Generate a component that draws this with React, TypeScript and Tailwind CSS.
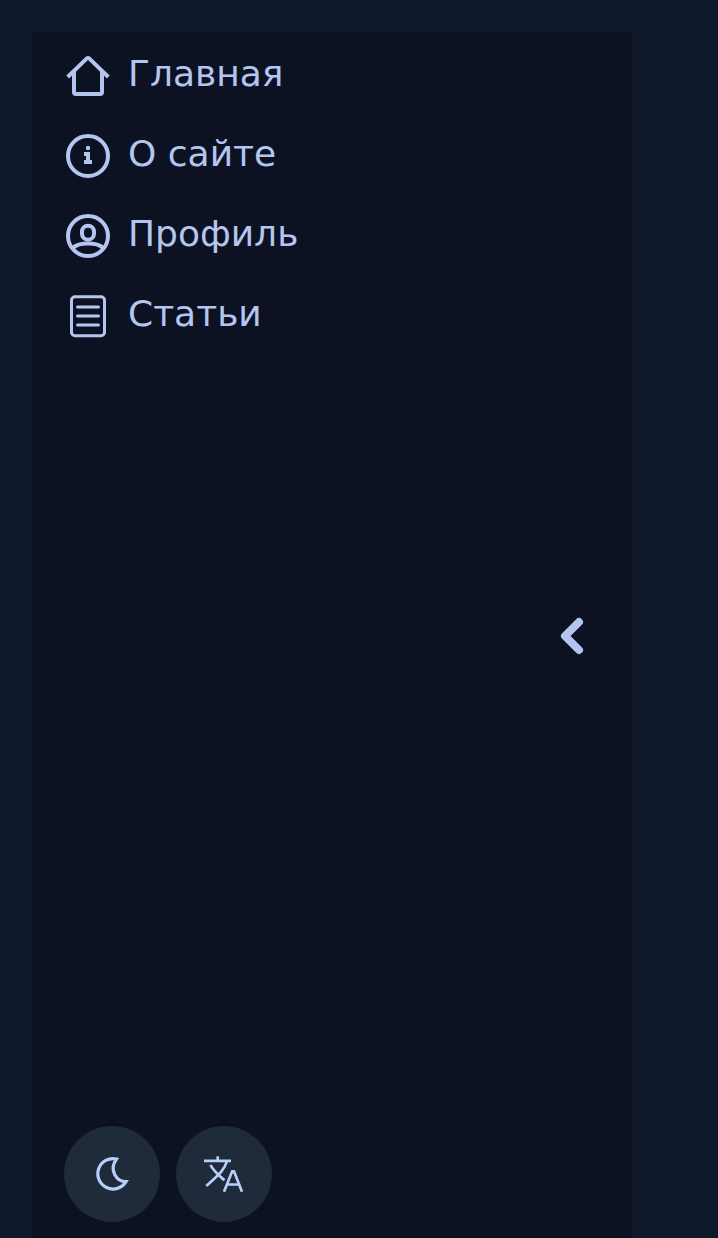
import React from "react";

type IconProps = { children: React.ReactNode; stroke?: number };

function Icon({ children, stroke = 4 }: IconProps) {
  return (
    <svg
      aria-hidden="true"
      viewBox="0 0 48 48"
      className="size-12 shrink-0"
      fill="none"
      stroke="currentColor"
      strokeWidth={stroke}
      strokeLinecap="round"
      strokeLinejoin="round"
    >
      {children}
    </svg>
  );
}

const links = [
  {
    label: "Главная",
    href: "#main",
    icon: (
      <Icon>
        <path d="M3.700 25 22.600 6.600q1.400-1.200 2.800 0L44.300 25" strokeLinecap="butt" />
        <path d="M10 19.500V40q0 2 2 2h24q2 0 2-2V19.500" />
      </Icon>
    ),
  },
  {
    label: "О сайте",
    href: "#about",
    icon: (
      <Icon>
        <circle cx="24" cy="24" r="20" />
        <circle cx="24" cy="16" r="2.200" fill="currentColor" stroke="none" />
        <path d="M20 20h6v8h2v4h-8v-4h2v-4h-2z" fill="currentColor" stroke="none" />
      </Icon>
    ),
  },
  {
    label: "Профиль",
    href: "#profile",
    icon: (
      <Icon>
        <circle cx="24" cy="24" r="20" />
        <rect x="18" y="13.700" width="12" height="14" rx="6" />
        <path d="M9.500 35.500c3-3 8-4 14.500-4s11.500 1 14.500 4" />
      </Icon>
    ),
  },
  {
    label: "Статьи",
    href: "#articles",
    icon: (
      <Icon stroke={3}>
        <rect x="7.500" y="4.800" width="33" height="39" rx="3.500" />
        <path d="M13.500 15h21M13.500 24h21M13.500 33h21" />
      </Icon>
    ),
  },
];

export default function App() {
  return (
    <div className="flex min-h-screen bg-[#0f172a] pt-8 pl-8 font-['DejaVu_Sans',sans-serif] text-[#b4c6ef]">
      <aside className="flex w-full max-w-[600px] justify-between bg-[#0c1221] pr-12 pl-8">
        <div className="flex flex-col justify-between pt-5 pb-4">
          <nav className="flex flex-col gap-8">
            {links.map(({ label, href, icon }) => (
              <a key={href} href={href} className="flex h-12 items-start gap-4 text-4xl leading-[44px]">
                {icon}
                <span>{label}</span>
              </a>
            ))}
          </nav>
          <div className="flex gap-4">
            <button type="button" aria-label="Сменить тему" className="flex size-24 items-center justify-center rounded-full bg-[#1f2a3b] text-[#b7d0fa]">
              <Icon stroke={3.2}>
                <path d="M28.500 9A15.200 15.200 0 1 0 38 31.700C28.500 31.700 20.500 20 28.500 9z" strokeLinejoin="miter" />
              </Icon>
            </button>
            <button type="button" aria-label="Сменить язык" className="flex size-24 items-center justify-center rounded-full bg-[#1f2a3b] text-[#b7d0fa]">
              <Icon stroke={2.7}>
                <path
                  d="M4 10.800h27M17.700 6.300v4.500M26.800 11.500C24.500 20 19 24.500 6.300 36M10.500 15c2.500 5.500 8 10 14 15.300M24 41.700 32.200 21.300h1.800l8 20.400M27 34.500h12"
                  strokeLinecap="butt"
                  strokeLinejoin="miter"
                />
              </Icon>
            </button>
          </div>
        </div>
        <button type="button" aria-label="Свернуть меню" className="flex h-12 w-6 items-center justify-center self-center">
          <svg aria-hidden="true" viewBox="0 0 24 48" className="h-12 w-6" fill="none" stroke="currentColor" strokeWidth="8" strokeLinecap="round" strokeLinejoin="round">
            <path d="M19 11 5 25 19 39" />
          </svg>
        </button>
      </aside>
    </div>
  );
}
